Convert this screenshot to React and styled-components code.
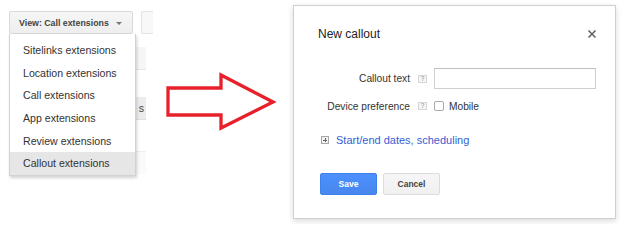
import React from "react";
import styled, { createGlobalStyle } from "styled-components";

const Global = createGlobalStyle`
  html, body { margin: 0; padding: 0; background: #fff; }
  body { font-family: "Liberation Sans", Arial, sans-serif; }
  * { box-sizing: border-box; }
`;

const Page = styled.div`
  display: flex;
  width: 624px;
  height: 224px;
  overflow: hidden;
  background: #fff;
`;

const LeftPane = styled.div`
  position: relative;
  flex: 0 0 160px;
  padding: 11px 0 0 9px;
`;

const Toolbar = styled.div`
  display: flex;
  gap: 8px;
`;

const ViewButton = styled.div`
  display: flex;
  align-items: center;
  gap: 7px;
  width: 124px;
  height: 23px;
  padding-left: 9px;
  border: 1px solid #d9d9d9;
  border-radius: 2px;
  background: linear-gradient(#f6f6f6, #eeeeee);
  color: #444;
  font-size: 8.8px;
  font-weight: bold;
`;

const Caret = styled.span`
  width: 0;
  height: 0;
  margin-top: 1px;
  border-left: 3px solid transparent;
  border-right: 3px solid transparent;
  border-top: 3px solid #777;
`;

const GhostButton = styled.div`
  width: 12px;
  height: 23px;
  border: 1px solid #e2e2e2;
  border-right: none;
  border-radius: 2px 0 0 2px;
  background: #f8f8f8;
`;

const Table = styled.div`
  width: 137px;
  display: flex;
  flex-direction: column;
`;

const TableRow = styled.div`
  height: ${(p) => p.$h}px;
  background: ${(p) => p.$bg || "#fff"};
  border-bottom: 1px solid ${(p) => p.$line || "transparent"};
  display: flex;
  justify-content: flex-end;
  align-items: center;
  padding-right: 2px;
  color: #444;
  font-size: 10.6px;
`;

const RedTab = styled.div`
  position: absolute;
  left: 10px;
  top: 174px;
  width: 87px;
  height: 2px;
  background: #d8503f;
`;

const Menu = styled.div`
  position: absolute;
  left: 9px;
  top: 34px;
  width: 127px;
  padding-top: 5px;
  background: #fff;
  border: 1px solid #d2d2d2;
  border-top: none;
  box-shadow: 1px 2px 3px rgba(0, 0, 0, 0.18);
`;

const MenuItem = styled.div`
  height: 22.6px;
  display: flex;
  align-items: center;
  padding-left: 13px;
  font-size: 10.6px;
  color: #333;
  background: ${(p) => (p.$active ? "#e6e6e6" : "transparent")};
`;

const ArrowWrap = styled.div`
  flex: 0 0 133px;
`;

const Modal = styled.div`
  flex: 0 0 323px;
  height: 214px;
  margin-top: 5px;
  padding: 20px 19px 0 24px;
  background: #fff;
  border: 1px solid #cfcfcf;
  box-shadow: 0 2px 6px rgba(0, 0, 0, 0.15);
  display: flex;
  flex-direction: column;
`;

const Header = styled.div`
  display: flex;
  justify-content: space-between;
  align-items: center;
  height: 16px;
`;

const Title = styled.div`
  font-size: 12px;
  color: #222;
`;

const Close = styled.div`
  width: 10px;
  height: 10px;
  margin-right: -1px;
  display: flex;
`;

const Form = styled.div`
  margin-top: 26px;
  display: grid;
  grid-template-columns: 92px 24px 1fr;
  row-gap: 10px;
  align-items: center;
`;

const Label = styled.div`
  text-align: right;
  font-size: 10.2px;
  color: #333;
`;

const HelpBox = styled.div`
  width: 9px;
  height: 8px;
  margin-left: 8px;
  border: 1px solid #d6d6d6;
  background: #f6f6f6;
  color: #8a8a8a;
  font-size: 6.5px;
  line-height: 6px;
  text-align: center;
`;

const Input = styled.div`
  height: 21px;
  border: 1px solid #cfcfcf;
  border-top-color: #c0c0c0;
  background: #fff;
`;

const CheckRow = styled.div`
  display: flex;
  align-items: center;
  gap: 5px;
  height: 14px;
  font-size: 10.2px;
  color: #333;
`;

const Checkbox = styled.div`
  width: 10px;
  height: 10px;
  border: 1px solid #a8a8a8;
  border-radius: 2px;
  background: #fff;
`;

const LinkRow = styled.div`
  margin-top: 20px;
  margin-left: 3px;
  display: flex;
  align-items: center;
  gap: 7px;
  height: 14px;
`;

const PlusBox = styled.div`
  position: relative;
  width: 8px;
  height: 8px;
  border: 1px solid #a8a8a8;
  background: #f2f2f2;
  &::before,
  &::after {
    content: "";
    position: absolute;
    background: #666;
  }
  &::before { left: 1px; right: 1px; top: 2.5px; height: 1px; }
  &::after { top: 1px; bottom: 1px; left: 2.5px; width: 1px; }
`;

const Link = styled.span`
  font-size: 11px;
  color: #3360d4;
`;

const Actions = styled.div`
  margin-top: 26px;
  margin-left: 2px;
  display: flex;
  gap: 6px;
`;

const Button = styled.div`
  width: 57px;
  height: 22px;
  display: flex;
  align-items: center;
  justify-content: center;
  border-radius: 2px;
  font-size: 8.5px;
  font-weight: bold;
  border: 1px solid ${(p) => (p.$primary ? "#3b82f0" : "#dcdcdc")};
  background: ${(p) =>
    p.$primary ? "linear-gradient(#4d90fe, #4787ed)" : "linear-gradient(#f6f6f6, #f0f0f0)"};
  color: ${(p) => (p.$primary ? "#fff" : "#444")};
`;

const items = [
  "Sitelinks extensions",
  "Location extensions",
  "Call extensions",
  "App extensions",
  "Review extensions",
  "Callout extensions",
];

export default function App() {
  return (
    <>
      <Global />
      <Page>
        <LeftPane>
          <Toolbar>
            <ViewButton>
              View: Call extensions <Caret />
            </ViewButton>
            <GhostButton />
          </Toolbar>
          <Table>
            <TableRow $h={13} />
            <TableRow $h={23} $bg="#f6f6f6" $line="#e6e6e6" />
            <TableRow $h={27} />
            <TableRow $h={23} $bg="#ececec" $line="#e0e0e0">s</TableRow>
            <TableRow $h={32} $line="#efefef" />
            <TableRow $h={22} $bg="#fafafa" />
          </Table>
          <RedTab />
          <Menu>
            {items.map((t, i) => (
              <MenuItem key={t} $active={i === items.length - 1}>
                {t}
              </MenuItem>
            ))}
          </Menu>
        </LeftPane>
        <ArrowWrap>
          <svg width="133" height="224" viewBox="0 0 133 224">
            <polygon
              points="8,88 61,88 61,75 113,102 61,128 61,115 8,115"
              fill="#fff"
              stroke="#e8202a"
              strokeWidth="3.3"
              strokeLinejoin="miter"
            />
          </svg>
        </ArrowWrap>
        <Modal>
          <Header>
            <Title>New callout</Title>
            <Close>
              <svg width="10" height="10" viewBox="0 0 10 10">
                <path d="M1.5 1.5 L8.5 8.5 M8.5 1.5 L1.5 8.5" stroke="#666" strokeWidth="1.6" />
              </svg>
            </Close>
          </Header>
          <Form>
            <Label>Callout text</Label>
            <HelpBox>?</HelpBox>
            <Input />
            <Label>Device preference</Label>
            <HelpBox>?</HelpBox>
            <CheckRow>
              <Checkbox />
              Mobile
            </CheckRow>
          </Form>
          <LinkRow>
            <PlusBox />
            <Link>Start/end dates, scheduling</Link>
          </LinkRow>
          <Actions>
            <Button $primary>Save</Button>
            <Button>Cancel</Button>
          </Actions>
        </Modal>
      </Page>
    </>
  );
}
